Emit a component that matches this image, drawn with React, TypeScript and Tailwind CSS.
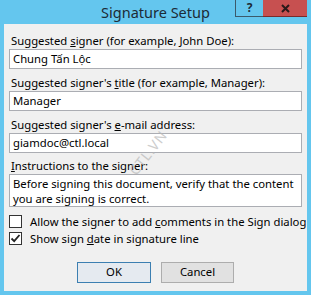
import { PropsWithChildren } from "react";

const font = { fontFamily: '"Noto Sans", "Open Sans", "Liberation Sans", sans-serif' };

function Field({ label, value, first }: { label: React.ReactNode; value: string; first?: boolean }) {
  return (
    <div className={first ? "" : "mt-[6px]"}>
      <div className="h-[15px] whitespace-nowrap pl-[2px] text-[11.3px] leading-[15px] text-black">{label}</div>
      <div className="mt-[1px] flex h-[20px] items-center border border-[#abadb3] bg-white px-[3px] text-[11.3px] text-black">
        {value}
      </div>
    </div>
  );
}

function Check({ checked, children }: PropsWithChildren<{ checked?: boolean }>) {
  return (
    <div className="flex h-[15px] items-center gap-[8px] whitespace-nowrap text-[11.3px] leading-[15px] text-black">
      <span className="flex h-[13px] w-[13px] shrink-0 items-center justify-center border border-[#333333] bg-white">
        {checked && (
          <svg width="11" height="11" viewBox="0 0 11 11">
            <path d="M1.5 5.5 L4.2 8.2 L9.5 2" fill="none" stroke="#222" strokeWidth="1.8" />
          </svg>
        )}
      </span>
      <span>{children}</span>
    </div>
  );
}

export default function App() {
  return (
    <div className="h-[295px] w-[311px] bg-[#64c6ee]" style={font}>
      {/* title bar */}
      <div className="relative flex h-[24px] items-center justify-center">
        <span className="text-[14.5px] leading-none text-[#1c2b36]">Signature Setup</span>
        <div className="absolute right-[4px] top-0 flex h-[17px]">
          <div className="flex w-[28px] items-center justify-center border-b border-l border-[#3b5a6b] text-[12px] font-bold leading-none text-[#1c2b36]">
            ?
          </div>
          <div className="flex w-[44px] items-center justify-center border-b border-[#7a2a2a] bg-[#c75050]">
            <svg width="9" height="9" viewBox="0 0 9 9">
              <path d="M1 1 L8 8 M8 1 L1 8" stroke="#2a1a1a" strokeWidth="2" />
            </svg>
          </div>
        </div>
      </div>

      {/* client area */}
      <div className="relative mx-[4px] h-[267px] bg-[#f0f0f0] px-[5px] pt-[9px]">
        <Field
          first
          label={<>Suggested <u>s</u>igner (for example, John Doe):</>}
          value="Chung Tấn Lộc"
        />
        <Field label={<>Suggested signer's <u>t</u>itle (for example, Manager):</>} value="Manager" />
        <Field label={<>Suggested signer's <u>e</u>-mail address:</>} value="giamdoc@ctl.local" />

        <div className="mt-[5px]">
          <div className="h-[15px] pl-[2px] text-[11.3px] leading-[15px] text-black">
            <u>I</u>nstructions to the signer:
          </div>
          <div className="mt-[1px] h-[33px] border border-[#abadb3] bg-white px-[3px] pt-[1px] text-[11.3px] leading-[15px] text-black">
            Before signing this document, verify that the content you are signing is correct.
          </div>
        </div>

        <div className="mt-[7px]">
          <Check>
            Allow the signer to add <u>c</u>omments in the Sign dialog
          </Check>
        </div>
        <div className="mt-[2px]">
          <Check checked>
            Show sign <u>d</u>ate in signature line
          </Check>
        </div>

        <div className="mt-[16px] flex gap-[10px] pl-[68px]">
          <button className="flex h-[21px] w-[74px] items-center justify-center border border-[#3c7fb1] bg-[#e5eaf0] text-[11.3px] text-black">
            OK
          </button>
          <button className="flex h-[21px] w-[73px] items-center justify-center border border-[#adadad] bg-[#e1e1e1] text-[11.3px] text-black">
            Cancel
          </button>
        </div>

        <span className="pointer-events-none absolute left-[118px] top-[118px] -rotate-[52deg] text-[14px] tracking-[1px] text-[#b9b9b9] opacity-70">
          CTL.VN
        </span>
      </div>
    </div>
  );
}
